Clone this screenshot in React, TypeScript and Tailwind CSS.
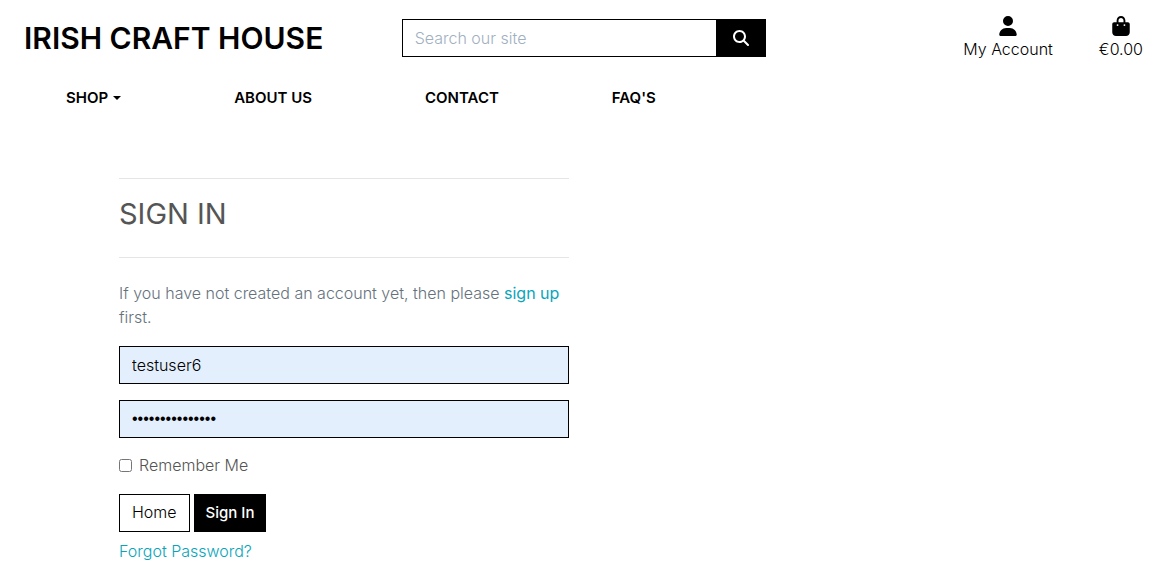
import { useState } from "react";
import { FaBagShopping, FaMagnifyingGlass, FaUser } from "react-icons/fa6";

const fieldClass =
  "block h-[38px] w-full border border-black bg-[#e3effd] px-3 text-black outline-none";

function Header() {
  return (
    <header className="text-black">
      <div className="grid grid-cols-3 items-center pt-[14px]">
        <a href="#" className="pl-6 text-[30px] leading-[48px] font-semibold whitespace-nowrap">
          IRISH CRAFT HOUSE
        </a>
        <form className="flex pr-[13px] pl-3" onSubmit={(e) => e.preventDefault()}>
          <input
            type="text"
            aria-label="Search our site"
            placeholder="Search our site"
            className="h-[38px] min-w-0 grow border border-r-0 border-black px-3 outline-none placeholder:text-[#9fb0bf]"
          />
          <button
            type="submit"
            aria-label="Search"
            className="flex h-[38px] w-[50px] items-center justify-center bg-black text-base text-white"
          >
            <FaMagnifyingGlass />
          </button>
        </form>
        <div className="flex justify-end gap-[46px] pr-[26px]">
          <a href="#" className="flex flex-col items-center gap-px">
            <FaUser className="text-xl" />
            <span>My Account</span>
          </a>
          <a href="#" className="flex flex-col items-center gap-px">
            <FaBagShopping className="text-xl" />
            <span>€0.00</span>
          </a>
        </div>
      </div>
      <nav className="flex gap-[113px] pt-6 pl-[66px] text-[15px] leading-6 font-semibold">
        <button type="button" className="flex items-center gap-[5px] font-semibold">
          SHOP
          <svg viewBox="0 0 8 4" className="h-1 w-2" fill="currentColor" aria-hidden="true">
            <path d="M0 0h8L4 4z" />
          </svg>
        </button>
        <a href="#">ABOUT US</a>
        <a href="#">CONTACT</a>
        <a href="#">FAQ'S</a>
      </nav>
    </header>
  );
}

export default function App() {
  const [username, setUsername] = useState("testuser6");
  const [password, setPassword] = useState("craftsofireland");

  return (
    <div className="bg-white font-['Inter',sans-serif] text-base leading-6 font-light">
      <Header />
      <main className="mt-[68px] w-full max-w-[569px] pl-[119px] text-[#555]">
        <hr className="border-[#e5e5e5]" />
        <h1 className="py-4 text-[29px] leading-[38px] font-normal">SIGN IN</h1>
        <hr className="mt-2 border-[#e5e5e5]" />
        <p className="mt-[23px] text-[#65727d]">
          If you have not created an account yet, then please{" "}
          <a href="#" className="font-normal text-[#08a5ba]">
            sign up
          </a>{" "}
          first.
        </p>
        <form className="mt-[17px]" onSubmit={(e) => e.preventDefault()}>
          <input
            type="text"
            aria-label="Username"
            value={username}
            onChange={(e) => setUsername(e.target.value)}
            className={fieldClass}
          />
          <input
            type="password"
            aria-label="Password"
            value={password}
            onChange={(e) => setPassword(e.target.value)}
            className={`mt-4 font-['Liberation_Sans',sans-serif] ${fieldClass}`}
          />
          <div className="mt-[15px] flex items-center gap-[7px]">
            <input id="remember" type="checkbox" className="size-[13px]" />
            <label htmlFor="remember">Remember Me</label>
          </div>
          <div className="mt-[17px] flex gap-1">
            <a href="#" className="h-[38px] border border-black px-3 py-[5px] text-black">
              Home
            </a>
            <button type="submit" className="h-[38px] bg-black px-3 text-[15px] font-medium text-white">
              Sign In
            </button>
          </div>
          <a href="#" className="mt-[7px] inline-block text-[#08a5ba]">
            Forgot Password?
          </a>
        </form>
      </main>
    </div>
  );
}
